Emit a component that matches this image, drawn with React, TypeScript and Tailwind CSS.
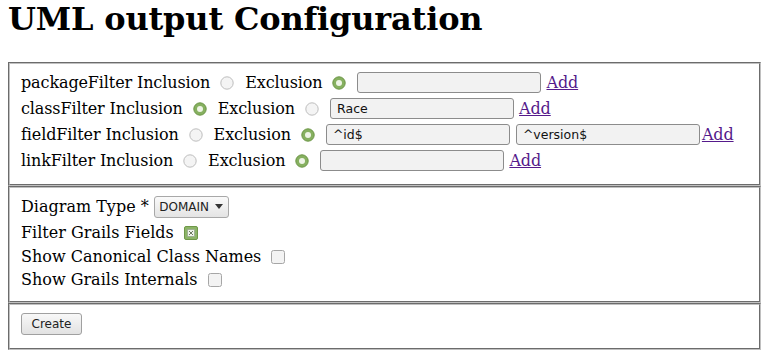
import React from "react";

function Radio({ checked }: { checked?: boolean }) {
  return (
    <svg width="14" height="14" viewBox="0 0 14 14" className="shrink-0">
      {checked ? (
        <>
          <circle cx="7" cy="7" r="6.2" fill="#86b060" stroke="#6c9646" strokeWidth="1" />
          <circle cx="7" cy="7" r="3" fill="#eef4e6" />
        </>
      ) : (
        <circle cx="7" cy="7" r="6.2" fill="#f4f4f4" stroke="#bdbdbd" strokeWidth="1" />
      )}
    </svg>
  );
}

function Checkbox({ checked }: { checked?: boolean }) {
  return (
    <svg width="14" height="14" viewBox="0 0 14 14" className="shrink-0">
      {checked ? (
        <>
          <rect x="0.5" y="0.5" width="13" height="13" rx="1.5" fill="#8cb467" stroke="#6f9848" />
          <rect x="3.5" y="3.5" width="7" height="7" fill="#eef3e9" stroke="#9aa890" strokeWidth="0.8" />
          <path d="M5 5 L9 9 M9 5 L5 9" stroke="#6b7a60" strokeWidth="1" />
        </>
      ) : (
        <rect x="0.5" y="0.5" width="13" height="13" rx="2" fill="#f3f3f3" stroke="#a6a6a6" />
      )}
    </svg>
  );
}

function TextBox({ value, className }: { value?: string; className?: string }) {
  return (
    <div
      className={
        "h-[21px] w-[184px] shrink-0 rounded-[3px] border border-[#8c8c8c] bg-[#f2f2f2] pl-[6px] font-['DejaVu_Sans',sans-serif] text-[12.5px] leading-[19px] tracking-normal text-[#111] " +
        (className ?? "")
      }
    >
      {value}
    </div>
  );
}

function AddLink({ className }: { className?: string }) {
  return (
    <a href="#" className={"text-[#551a8b] underline " + (className ?? "")}>
      Add
    </a>
  );
}

const filters = [
  { name: "packageFilter", inclusion: false, values: [""] },
  { name: "classFilter", inclusion: true, values: ["Race"] },
  { name: "fieldFilter", inclusion: false, values: ["^id$", "^version$"] },
  { name: "linkFilter", inclusion: false, values: [""] },
];

const fieldset = "border-2 border-[#c0c0c0] [border-style:groove] pl-[11px] pr-3 pt-[5.6px] pb-[10px]";

export default function App() {
  return (
    <div className="px-2 pb-2 font-['DejaVu_Serif',serif] text-[16px] text-black">
      <h1 className="mb-[24px] text-[32px] font-bold leading-[38px] tracking-[-0.18px]">UML output Configuration</h1>

      <fieldset className={fieldset + " tracking-[-0.12px]"}>
        {filters.map((f) => (
          <div key={f.name} className="flex h-[26px] items-center whitespace-nowrap">
            <span>{f.name} Inclusion</span>
            <span className="ml-[10px]">
              <Radio checked={f.inclusion} />
            </span>
            <span className="ml-[11px]">Exclusion</span>
            <span className="ml-[10px]">
              <Radio checked={!f.inclusion} />
            </span>
            {f.values.map((v, i) => (
              <TextBox key={i} value={v} className={i === 0 ? "ml-[11px]" : "ml-[6px]"} />
            ))}
            <AddLink className={f.values.length > 1 ? "ml-[2px]" : "ml-[5px]"} />
          </div>
        ))}
      </fieldset>

      <fieldset className={fieldset}>
        <div className="flex h-[27px] items-center whitespace-nowrap">
          <span>Diagram Type *</span>
          <div className="ml-[5px] flex h-[22px] w-[75px] items-center justify-center gap-[6px] rounded-[3px] border border-[#a8a8a8] bg-gradient-to-b from-[#fafafa] to-[#e4e4e4] font-['DejaVu_Sans',sans-serif] text-[12px] text-[#222]">
            <span>DOMAIN</span>
            <svg width="8" height="5" viewBox="0 0 8 5">
              <path d="M0 0 H8 L4 5 Z" fill="#333" />
            </svg>
          </div>
        </div>
        <div className="flex h-[25px] items-center whitespace-nowrap">
          <span>Filter Grails Fields</span>
          <span className="ml-[10px]">
            <Checkbox checked />
          </span>
        </div>
        <div className="flex h-[23px] items-center whitespace-nowrap">
          <span>Show Canonical Class Names</span>
          <span className="ml-[10px]">
            <Checkbox />
          </span>
        </div>
        <div className="flex h-[23px] items-center whitespace-nowrap">
          <span>Show Grails Internals</span>
          <span className="ml-[10px]">
            <Checkbox />
          </span>
        </div>
      </fieldset>

      <fieldset className={fieldset}>
        <div className="flex h-[27px] items-center">
          <button className="h-[22px] w-[61px] rounded-[3px] border border-[#a0a0a0] bg-gradient-to-b from-[#f8f8f8] to-[#e2e2e2] font-['DejaVu_Sans',sans-serif] text-[12px] text-[#222]">
            Create
          </button>
        </div>
      </fieldset>
    </div>
  );
}
